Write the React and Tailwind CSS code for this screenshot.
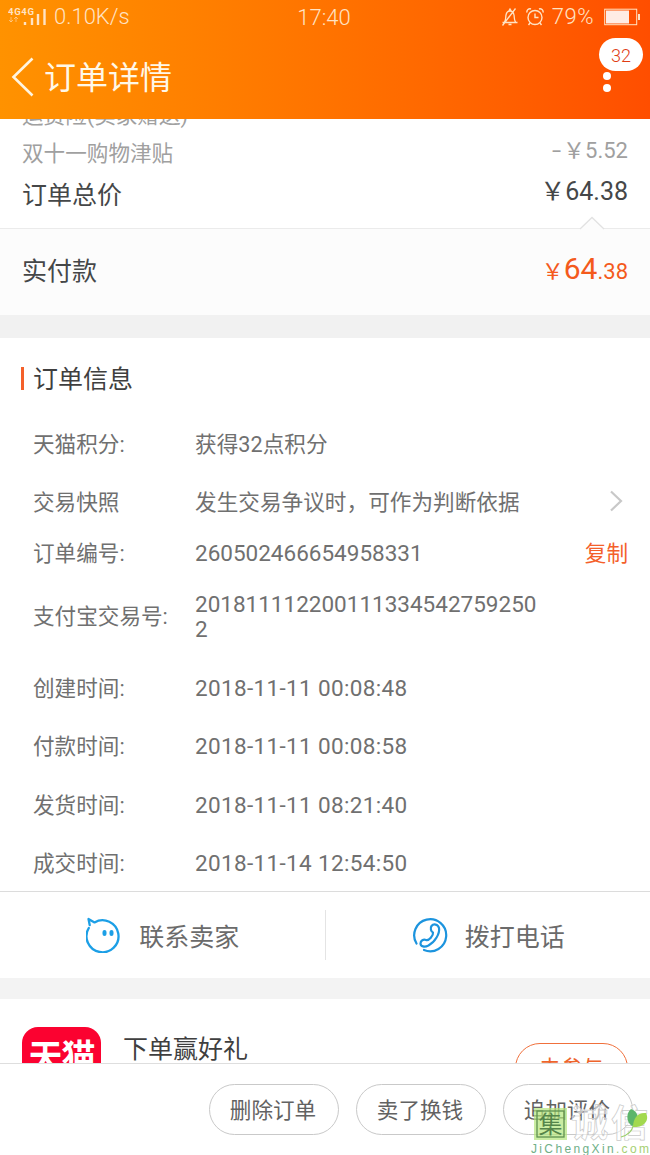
import React from 'react'

const orderInfo = [
  { label: '天猫积分:', value: '获得32点积分', row: 'h-[59px]' },
  { label: '交易快照', value: '发生交易争议时，可作为判断依据', row: 'h-[58px]', arrow: true },
  { label: '订单编号:', value: '260502466654958331', row: 'h-[43px]', copy: true, number: true },
  { label: '支付宝交易号:', value: '2018111122001113345427592502', row: 'h-[84px]', number: true },
  { label: '创建时间:', value: '2018-11-11 00:08:48', row: 'h-[59px]', date: true },
  { label: '付款时间:', value: '2018-11-11 00:08:58', row: 'h-[58px]', date: true },
  { label: '发货时间:', value: '2018-11-11 08:21:40', row: 'h-[59px]', date: true },
  { label: '成交时间:', value: '2018-11-14 12:54:50', row: 'h-[57px]', date: true },
]

const valueClass = (item) => {
  if (item.number) return 'w-[348px] break-all text-[22.500px]'
  if (item.date) return 'whitespace-nowrap text-[22.500px] tracking-[0.350px]'
  return 'whitespace-nowrap tracking-[0.050px]'
}

const StatusBar = () => (
  <div className="flex h-[34px] items-center justify-between pl-2 pr-[10px] text-[22px] font-light text-[#ffe3c4]">
    <div className="flex w-[240px] items-center">
      <svg width="40" height="20" viewBox="0 0 40 20" className="mr-[6px] shrink-0">
        <text x="0" y="8" fontSize="9.500" fontWeight="700" textLength="26" fill="currentColor">4G4G</text>
        <path d="M3 10v5M1 13l2 2 2-2M8 15v-5M6 12l2-2 2 2" stroke="currentColor" strokeWidth="0.8" fill="none" opacity="0.7" />
        <path d="M17 15v3M24 11v7M30 7v11M36.500 2v16" stroke="currentColor" strokeWidth="2.400" />
      </svg>
      <span className="leading-none">0.10K/s</span>
    </div>
    <span className="pt-[2px] leading-none">17:40</span>
    <div className="flex w-[240px] items-center justify-end">
      <svg width="18" height="20" viewBox="0 0 18 20" fill="none" stroke="currentColor" strokeWidth="1.300" className="mr-[2px]">
        <path d="M1.500 15.500h15M3.500 15c1.500-2 1-4.500 1.500-7 .5-2.600 2-4 4-4s3.500 1.400 4 4c.5 2.500 0 5 1.500 7M7.500 17.500h3M8 3.500l1-1.500 1 1.500M1.500 18.500L14.500 1.500" />
      </svg>
      <svg width="18" height="20" viewBox="0 0 18 20" fill="none" stroke="currentColor" strokeWidth="1.400" className="ml-[5px]">
        <circle cx="9" cy="10.500" r="7" />
        <path d="M9 6.500v4h3.500M1 5.500a3 3 0 0 1 4-3.500M17 5.500a3 3 0 0 0-4-3.500M4 16l-1.500 2M14 16l1.500 2" />
      </svg>
      <span className="ml-[8px] leading-none tracking-[0.500px]">79%</span>
      <svg width="36" height="18" viewBox="0 0 36 18" className="ml-[10px]">
        <rect x="0.700" y="1.200" width="32" height="15.500" fill="none" stroke="currentColor" />
        <rect x="2" y="2.500" width="23" height="13" fill="#ffece4" />
        <path d="M35 6v6" stroke="currentColor" strokeWidth="2" />
      </svg>
    </div>
  </div>
)

const Header = () => (
  <header className="h-[119px] shrink-0 bg-linear-to-r from-[#ff9200] to-[#ff4e00]">
    <StatusBar />
    <div className="flex h-[85px] items-center justify-between pl-[11px]">
      <div className="flex items-center">
        <svg width="24" height="40" viewBox="0 0 24 40" fill="none" stroke="#fff5e0" strokeWidth="2.600" className="mr-[9px]">
          <path d="M21.500 1.500L2.500 20l19 18.500" />
        </svg>
        <h1 className="pt-[3px] text-[32px] leading-none text-[#fff8e8]">订单详情</h1>
      </div>
      <div className="relative mr-[39px] flex h-[34px] w-2 flex-col justify-end gap-1 pb-[2px]">
        <span className="h-2 w-2 rounded-full bg-white" />
        <span className="h-2 w-2 rounded-full bg-white" />
        <span className="absolute -left-1 -top-[22px] flex h-[33px] w-[44px] items-center justify-center rounded-full bg-white pt-[2px] text-[18px] font-light text-[#e03c14]">
          32
        </span>
      </div>
    </div>
  </header>
)

const Prices = () => (
  <section>
    <div className="-mt-[22px] h-[132px] border-b border-[#ebebeb] px-[22px] text-[#454748]">
      <div className="flex h-[38px] items-center text-[21.600px] text-[#a0a0a0]">运费险(卖家赠送)</div>
      <div className="flex h-[39px] items-center justify-between text-[21.600px] text-[#a0a0a0]">
        <span>双十一购物津贴</span>
        <span className="-mt-2 flex text-[22px]">
          <span className="mr-px w-[11px] scale-x-150 text-center">-</span>￥5.52
        </span>
      </div>
      <div className="flex h-[43px] items-center justify-between text-[25px]">
        <span>订单总价</span>
        <span className="-mt-2">￥64.38</span>
      </div>
    </div>
    <div className="relative flex h-[86px] items-center justify-between bg-[#fcfcfc] px-[22px] text-[25px] text-[#454748]">
      <svg width="26" height="14" viewBox="0 0 26 14" className="absolute right-[45px] -top-[13px]">
        <path d="M1 13L13 1.500 25 13" fill="#fcfcfc" stroke="#e2e2e2" strokeWidth="1.300" />
      </svg>
      <span className="-mt-px">实付款</span>
      <span className="-mt-2 text-[22px] text-[#f45a1c]">
        ￥<span className="text-[30px]">64</span>.38
      </span>
    </div>
  </section>
)

const OrderInfo = () => (
  <section className="border-b border-[#dcdcdc] text-[#707070]">
    <div className="flex h-[76px] items-center pl-[21px] pt-1">
      <span className="mr-[9px] h-[23px] w-[3px] bg-[#f4602a]" />
      <h2 className="pt-[3px] text-[25px] text-[#3f3f3f]">订单信息</h2>
    </div>
    {orderInfo.map((item) => (
      <div key={item.label} className={`flex items-center pl-[33px] pr-[22px] pt-[1px] text-[21.600px] leading-[25px] ${item.row}`}>
        <span className="w-[162px] shrink-0 whitespace-nowrap">{item.label}</span>
        <span className={valueClass(item)}>{item.value}</span>
        {item.arrow && (
          <svg width="14" height="22" viewBox="0 0 14 22" fill="none" stroke="#c8c8c8" strokeWidth="2.200" className="-mt-1 ml-auto mr-[5px]">
            <path d="M2 1.500L12 11 2 20.500" />
          </svg>
        )}
        {item.copy && <button className="ml-auto text-[#f4602a]">复制</button>}
      </div>
    ))}
  </section>
)

const Contact = () => (
  <section className="flex h-[86px] items-center text-[25px] text-[#6b6b6b]">
    <div className="flex h-[50px] flex-1 items-center justify-center border-r border-[#e4e4e4] pl-px">
      <svg width="36" height="36" viewBox="0 0 36 36" fill="none" stroke="#1c9fe6" strokeWidth="2.300" strokeLinecap="round" className="mr-[17px]">
        <path d="M2.800 11A16 16 0 1 0 8.500 5.400L2.500 2l1.200 6" strokeLinejoin="round" />
        <path d="M18.500 15v2M25.500 15v2" strokeWidth="4" />
      </svg>
      <span className="pt-[5px]">联系卖家</span>
    </div>
    <div className="flex flex-1 items-center justify-center pl-px">
      <svg width="36" height="36" viewBox="0 0 36 36" fill="none" stroke="#1c94de" strokeWidth="2.200" strokeLinecap="round" strokeLinejoin="round" className="mr-[17px]">
        <path d="M4.500 26.500A16 16 0 1 1 12 33" />
        <path d="M19.500 9c2-2.500 6.500-2 7.500 2 1 5.500-4 14-10.500 17.500-4 2-8 1-8-2s3-4.500 5.500-3.500c3 1 7.500-4.500 7-7.500-2-.5-3-4.500-1.500-6.500z" />
      </svg>
      <span className="pt-[5px]">拨打电话</span>
    </div>
  </section>
)

const Promo = () => (
  <section className="flex items-start px-[22px] pt-[28px]">
    <div className="flex h-[80px] w-[79px] shrink-0 justify-center rounded-[16px] bg-[#fb0230] pt-[12px] text-[34px] font-bold leading-[36px] tracking-[-1px] text-white">
      天猫
    </div>
    <span className="ml-[22px] mt-[5px] text-[25px] leading-9 text-[#3f3f3f]">下单赢好礼</span>
    <button className="ml-auto mt-[16px] h-[50px] w-[113px] rounded-full border-[1.500px] border-[#f0703c] pt-[2px] text-[21.600px] text-[#ee642c]">
      去参与
    </button>
  </section>
)

const Watermark = () => (
  <svg width="122" height="54" viewBox="0 0 122 54" className="absolute bottom-0 right-0">
    <rect x="6" y="7" width="33" height="32" fill="#b4e67a" opacity="0.700" />
    <rect x="9" y="10" width="27" height="26" fill="none" stroke="#5f9150" strokeWidth="1.300" />
    <text x="10.500" y="32" fontSize="24" fill="#55854a">集</text>
    <g fill="#fff" fillOpacity="0.600" stroke="#c9c9c9" strokeWidth="0.700" fontSize="37" fontWeight="700">
      <text x="43" y="36">诚</text>
      <text x="83" y="36">信</text>
    </g>
    <path d="M104 25c-6-4-6-13-1-17 6 2 9 8 5 15z" fill="#5cb56a" />
    <path d="M105 26c0-9 5-15 13-14 4 8-3 15-13 14z" fill="#a2d94f" />
    <path d="M105 25c-1 6-5 9-12 11" stroke="#9bcf6a" strokeWidth="1.200" fill="none" />
    <text x="3" y="52" fontSize="12" fontFamily="Liberation Sans, sans-serif" textLength="118" fill="#6fb087">JiChengXin<tspan fill="#a5cf72">.com</tspan></text>
  </svg>
)

const Footer = () => (
  <footer className="relative flex h-[92px] shrink-0 items-center justify-end gap-[17px] border-t border-[#dedede] bg-white pr-[17px]">
    {['删除订单', '卖了换钱', '追加评价'].map((label) => (
      <button key={label} className="h-[51px] w-[130px] rounded-full border border-[#c9c9c9] pr-[2px] pt-[3px] text-[21.600px] text-[#626262]">
        {label}
      </button>
    ))}
    <Watermark />
  </footer>
)

const App = () => {
  return (
    <div className="flex h-[1155px] w-[650px] flex-col overflow-hidden bg-white font-['Roboto','Noto_Sans_CJK_SC',sans-serif]">
      <Header />
      <main className="flex-1 overflow-hidden">
        <Prices />
        <div className="h-[23px] bg-[#f1f1f1]" />
        <OrderInfo />
        <Contact />
        <div className="h-[21px] bg-[#f3f3f3]" />
        <Promo />
      </main>
      <Footer />
    </div>
  )
}

export default App
